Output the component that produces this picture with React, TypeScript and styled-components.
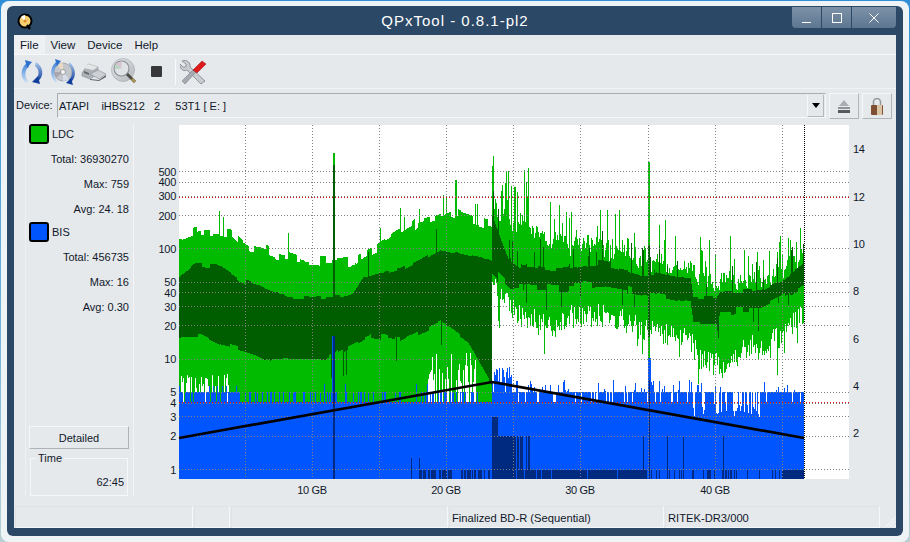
import React from 'react';
import styled, { createGlobalStyle } from 'styled-components';

const FONT = `"Liberation Sans", Arial, sans-serif`;

const GlobalStyle = createGlobalStyle`
    html, body, #root { margin: 0; padding: 0; width: 910px; height: 542px; overflow: hidden; }
    body { font-family: ${FONT}; font-size: 11px; color: #10182a; }
`;

// plot geometry, in window pixels
const LEFT = 179;
const RIGHT = 849;
const TOP = 125;
const BOTTOM = 479;
const DATA_END = 804;
const MID = 492;

const logY = (v: number) => 469 - Math.log10(v) * 110.3;

let seed = 73;
const rnd = () => {
    seed = (seed * 16807) % 2147483647;
    return seed / 2147483647;
};

const lerp = (pts: number[][], x: number) => {
    for (let i = 1; i < pts.length; i++) {
        if (x <= pts[i][0]) {
            const [x0, y0] = pts[i - 1];
            const [x1, y1] = pts[i];
            return y0 + ((y1 - y0) * (x - x0)) / (x1 - x0);
        }
    }
    return pts[pts.length - 1][1];
};

// noise that holds its value over a few columns, the trace is blocky
const blocky = (amp: number, min = 3, max = 9) => {
    let left = 0;
    let val = 0;
    return () => {
        if (left-- <= 0) {
            left = min + Math.floor(rnd() * (max - min));
            val = (rnd() - 0.5) * amp;
        }
        return val;
    };
};

const lightTop = [[179, 238], [200, 231], [230, 233], [246, 247], [265, 250], [280, 255], [330, 262], [350, 262], [380, 245], [420, 222], [450, 212], [491, 226], [492, 205], [520, 218], [550, 236], [600, 240], [640, 252], [690, 266], [720, 276], [760, 274], [780, 266], [804, 250]];
const darkTop = [[179, 277], [195, 265], [220, 267], [240, 280], [260, 287], [270, 293], [290, 297], [340, 297], [352, 294], [362, 278], [400, 270], [440, 249], [491, 260], [492, 215], [508, 258], [520, 266], [560, 270], [600, 263], [640, 273], [690, 280], [693, 299], [716, 299], [720, 293], [760, 292], [780, 282], [804, 265]];
const darkBot = [[179, 337], [200, 335], [220, 345], [240, 350], [255, 355], [270, 362], [325, 360], [350, 346], [370, 335], [400, 340], [440, 322], [470, 345], [491, 382], [492, 270], [510, 287], [560, 288], [600, 284], [640, 292], [690, 302], [693, 323], [716, 323], [720, 312], [760, 310], [780, 300], [804, 285]];
const lightBot = [[492, 275], [503, 288], [515, 302], [540, 310], [552, 318], [562, 306], [600, 302], [620, 307], [640, 316], [690, 328], [700, 348], [725, 356], [745, 336], [780, 326], [804, 300]];

const buildChart = () => {
    let light = '';
    let dark = '';
    let blue = '';
    let navy = '';
    const bar = (x: number, y1: number, y2: number) => `M${x + 0.5} ${y1.toFixed(0)}V${y2.toFixed(0)}`;
    const noiseTop = blocky(12, 2, 6);
    const noiseDarkTop = blocky(7, 4, 12);
    const noiseDarkBot = blocky(9, 4, 12);
    for (let x = LEFT; x < DATA_END; x++) {
        const left = x < MID;
        // LDC maximum envelope
        let t = lerp(lightTop, x) + noiseTop();
        if (left && rnd() < 0.03) t -= 30 * rnd();
        if (!left) {
            t += 14 * rnd();
            if (rnd() < 0.24) t -= (x < 560 ? 55 : 42) * rnd();
        }
        if (x >= 455 && x <= 456) t = 180;
        if (x >= 492 && x < 530 && rnd() < 0.34) t = 162 + 38 * rnd();
        let b: number;
        if (left) {
            b = 402;
            if (x < 232 && rnd() < 0.55) b = 374 + rnd() * 18;
            if (x > 425 && x < 476 && rnd() < 0.55) b = 352 + rnd() * 32;
        } else {
            b = lerp(lightBot, x) + rnd() * 24;
            if (rnd() < 0.12) b += 34 * rnd();
        }
        if (x === 333 || x === 334) { t = 153; b = 402; }
        if (x === 648 || x === 649) { t = 162; b = 372; }
        light += bar(x, t, b);
        // LDC average band
        let dt = lerp(darkTop, x) + noiseDarkTop() * (left ? 0.7 : 1);
        let db = lerp(darkBot, x) + noiseDarkBot() * (left ? 0.8 : 1);
        if (!left && rnd() < 0.09) dt -= 32 * rnd();
        if (!left && rnd() < 0.1) db += 26 * rnd();
        if (left && rnd() < 0.012) dt -= 24;
        if (left && rnd() < 0.012) db += 24;
        if (x === 333 || x === 334) { dt = 165; db = 398; }
        if (x === 648 || x === 649) { dt = 245; db = 337; }
        dark += bar(x, dt, db);
        // BIS
        let top = 402;
        const r = rnd();
        if (x < 240) top = r < 0.14 ? 402 : r > 0.86 ? 386 : 392;
        else if (x < 430) top = r < 0.2 ? 392 : r < 0.23 ? 384 : 402;
        else if (x < 478) top = r < 0.5 ? 392 : 402;
        else if (x < MID) top = 402;
        else if (x < 512) top = r < 0.8 ? 366 + rnd() * 20 : 392;
        else if (x < 690) top = r < 0.16 ? 402 : r > 0.78 ? 392 - rnd() * 12 : 392;
        else if (x < 762) top = r < 0.28 ? 403 + rnd() * 14 : r > 0.85 ? 388 - rnd() * 6 : 392;
        else top = r < 0.12 ? 402 : r > 0.82 ? 392 - rnd() * 10 : 392;
        if (x >= 332 && x <= 334) top = 336;
        if (x >= 648 && x <= 650) top = 358;
        blue += bar(x, top, BOTTOM);
        // dark BIS columns and the low band
        let band = false;
        if (x >= 492 && x < 648) band = !(x > 495 && x < 500) && !(x > 512 && x < 518) && rnd() > 0.04;
        else if (x >= 418 && x < 492) band = rnd() < 0.5;
        else if (x >= 650 && x < 783) band = rnd() < 0.18;
        else if (x >= 783) band = true;
        if (band) navy += bar(x, 470, BOTTOM);
        if (x >= 492 && x < 498) navy += bar(x, 417, BOTTOM);
        else if (x >= 498 && x < 512) navy += bar(x, 436, BOTTOM);
        else if (x >= 512 && x < 530 && rnd() < 0.55) navy += bar(x, 436, BOTTOM);
        else if (x > 530 && x < 780 && rnd() < 0.025) navy += bar(x, 436, BOTTOM);
        else if (x < 420 && rnd() < 0.012) navy += bar(x, 458, BOTTOM);
        if (x === 333 || x === 334) navy += bar(x, 336, BOTTOM);
        if (x === 649) navy += bar(x, 380, BOTTOM);
    }
    return { light, dark, blue, navy };
};

const chart = buildChart();

const leftTicks = [1, 2, 3, 4, 5, 10, 20, 30, 40, 50, 100, 200, 300, 400, 500];
const rightTicks = [
    [14, 148],
    [12, 196],
    [10, 243],
    [8, 290],
    [6, 338],
    [4, 385],
    [2, 432],
];
const gridX = [245, 312, 379, 446, 513, 580, 648, 715, 782];
const xLabels = [
    [312, '10 GB'],
    [446, '20 GB'],
    [580, '30 GB'],
    [715, '40 GB'],
] as const;

const Chart = () => (
    <svg width={762} height={373} viewBox="134 124 762 373" style={{ display: 'block', flex: 'none' }}>
        <rect x={LEFT} y={TOP} width={RIGHT - LEFT} height={BOTTOM - TOP} fill="#fff" />
        <path d={chart.light} stroke="#00bb00" strokeWidth={1} shapeRendering="crispEdges" />
        <path d={chart.dark} stroke="#005e00" strokeWidth={1} shapeRendering="crispEdges" />
        <path d={chart.blue} stroke="#0055ff" strokeWidth={1} shapeRendering="crispEdges" />
        <path d={chart.navy} stroke="#002a80" strokeWidth={1} shapeRendering="crispEdges" />
        {leftTicks.map((v) => (
            <line
                key={v}
                x1={LEFT}
                x2={RIGHT}
                y1={Math.round(logY(v)) + 0.5}
                y2={Math.round(logY(v)) + 0.5}
                stroke="#808080"
                strokeDasharray="1 2"
                shapeRendering="crispEdges"
            />
        ))}
        {gridX.map((x) => (
            <line key={x} x1={x + 0.5} x2={x + 0.5} y1={TOP} y2={BOTTOM} stroke="#808080" strokeDasharray="1 2" shapeRendering="crispEdges" />
        ))}
        <line x1={LEFT} x2={RIGHT} y1={197.5} y2={197.5} stroke="#e80000" strokeDasharray="1 2" shapeRendering="crispEdges" />
        <line x1={LEFT} x2={RIGHT} y1={402.5} y2={402.5} stroke="#f00000" strokeDasharray="1 2" shapeRendering="crispEdges" />
        <line x1={DATA_END + 0.5} x2={DATA_END + 0.5} y1={TOP} y2={BOTTOM} stroke="#000" strokeDasharray="1 1" shapeRendering="crispEdges" />
        <polyline points={`${LEFT},438 ${MID},382 ${DATA_END},438`} fill="none" stroke="#000" strokeWidth={2.7} />
        {leftTicks.map((v) => (
            <AxisText key={v} x={176} y={logY(v) + 4.5} textAnchor="end">
                {v}
            </AxisText>
        ))}
        {rightTicks.map(([v, y]) => (
            <AxisText key={v} x={853} y={y + 4.5}>
                {v}
            </AxisText>
        ))}
        {xLabels.map(([x, label]) => (
            <AxisText key={x} x={x} y={494} textAnchor="middle">
                {label}
            </AxisText>
        ))}
    </svg>
);

const ArcGradients = () => (
    <defs>
        <linearGradient id="arcLight" x1="0" y1="1" x2="0" y2="0">
            <stop offset="0" stopColor="#cfe2f6" />
            <stop offset="1" stopColor="#3f82d8" />
        </linearGradient>
        <linearGradient id="arcDark" x1="0" y1="0" x2="0" y2="1">
            <stop offset="0" stopColor="#a9c8ec" />
            <stop offset="1" stopColor="#123f9c" />
        </linearGradient>
    </defs>
);

const RefreshIcon = () => (
    <svg width={26} height={26} viewBox="0 0 26 26">
        <ArcGradients />
        <path d="M8 4C2 8 0 18 7 24l2-2C5 17 6 10 10 8z" fill="url(#arcLight)" />
        <path d="M6 1l7 2-5 6z" fill="#2f70cc" />
        <path d="M17 3C24 7 26 17 19 22l-2-2C21 16 20 10 16 7z" fill="url(#arcDark)" />
        <path d="M21 25l-8-2 6-6z" fill="#123f9c" />
    </svg>
);

const DiscRefreshIcon = () => (
    <svg width={26} height={26} viewBox="0 0 26 26">
        <ArcGradients />
        <circle cx={13} cy={13} r={9} fill="#c3c6cb" stroke="#8f949a" strokeWidth={0.7} />
        <path d="M13 13L7 6A9 9 0 0 1 13 4z" fill="#e7d9c4" />
        <path d="M13 13l6 7a9 9 0 0 1-6 2z" fill="#d7dde8" />
        <path d="M13 13L4 13A9 9 0 0 0 6 19z" fill="#a9a6ae" />
        <circle cx={13} cy={13} r={2.5} fill="#f6f6f6" stroke="#7f848a" strokeWidth={0.7} />
        <path d="M6 3C0 8-1 18 6 24l1-2C3 17 3 9 8 6z" fill="url(#arcLight)" />
        <path d="M5 0l6 2-4 5z" fill="#2f70cc" />
        <path d="M19 3c7 5 8 15 2 20l-2-2c4-4 4-11 0-15z" fill="url(#arcDark)" />
        <path d="M23 26l-7-2 5-5z" fill="#123f9c" />
    </svg>
);

const DriveIcon = () => (
    <svg width={26} height={26} viewBox="0 0 26 26">
        <path d="M1 14l6-9 10 3v7l-8 5-8-3z" fill="#aeb2b7" stroke="#7b8086" strokeWidth={0.5} />
        <path d="M7 5l10 3-5 3L2 9z" fill="#e4e6e8" />
        <path d="M9 15l8-4 8 4-7 5z" fill="#cdd0d4" stroke="#777c82" strokeWidth={0.5} />
        <path d="M9 20l9 1 7-5v2l-7 4-9-1z" fill="#5d6268" />
        <path d="M3 12l5 2v2l-5-2z" fill="#62676d" />
    </svg>
);

const ScanIcon = () => (
    <svg width={28} height={28} viewBox="0 0 28 28">
        <defs>
            <linearGradient id="scanFace" x1="0" y1="0" x2="1" y2="1">
                <stop offset="0" stopColor="#e4e6e8" />
                <stop offset="1" stopColor="#b4b7bb" />
            </linearGradient>
        </defs>
        <circle cx={12} cy={12} r={11.5} fill="url(#scanFace)" stroke="#a4a8ac" strokeWidth={0.6} />
        <circle cx={10.5} cy={10.5} r={7.5} fill="#dfe3e6" stroke="#8a8f94" strokeWidth={1.1} />
        <path d="M10.500 10.500L5 6A7 7 0 0 1 10.500 3.500z" fill="#d8c4d0" />
        <path d="M10.500 10.500L4 11A7 7 0 0 1 5 6z" fill="#b9d4c0" />
        <path d="M16 16l8 8" stroke="#4f4c46" strokeWidth={3} />
        <path d="M21 21l3 3" stroke="#b99a48" strokeWidth={2} />
    </svg>
);

const StopIcon = () => (
    <svg width={11} height={11} viewBox="0 0 11 11">
        <rect width={11} height={11} rx={1} fill="#38383a" />
    </svg>
);

const ToolsIcon = () => (
    <svg width={26} height={26} viewBox="0 0 26 26">
        <path d="M2 2l4 3v3L3 8 0 5c-1 4 3 8 7 6l14 14 4-3L10 8c1-4-3-8-8-6z" fill="#c9ccd0" stroke="#74797f" strokeWidth={0.7} />
        <path d="M2 22l11-11 3 2L5 25z" fill="#a7abb1" stroke="#6d7278" strokeWidth={0.5} />
        <path d="M13 11l9-9 4 3-9 9z" fill="#df1a1c" stroke="#9a1112" strokeWidth={0.5} />
    </svg>
);

const AppLogo = () => (
    <svg width={16} height={17} viewBox="0 0 16 17">
        <circle cx={8} cy={8} r={6.5} fill="#f6cf70" stroke="#000" strokeWidth={2} />
        <path d="M8 8L4 4A6 6 0 0 1 8 2z" fill="#fff" />
        <circle cx={8} cy={8} r={1.5} fill="#e08a30" />
        <path d="M10 12l3 4" stroke="#000" strokeWidth={2.5} />
    </svg>
);

const EjectIcon = () => (
    <svg width={12} height={14} viewBox="0 0 12 14">
        <path d="M6 1l5 6H1z" fill="#a9adb1" />
        <rect x={0} y={8} width={12} height={2} fill="#8f9397" />
        <rect x={0} y={11} width={12} height={3} fill="#55595d" />
    </svg>
);

const LockIcon = () => (
    <svg width={12} height={17} viewBox="0 0 12 17">
        <path d="M2.500 7V4a3.500 3.500 0 0 1 7 0v3" fill="none" stroke="#97989a" strokeWidth={1.6} />
        <rect x={0} y={7} width={12} height={10} rx={1} fill="#7e4f32" />
        <rect x={6} y={7} width={5} height={10} fill="#d9c4a6" />
    </svg>
);

const GripIcon = () => (
    <svg width={12} height={12} viewBox="0 0 12 12">
        <path d="M11.500 1L1 11.500M11.500 5L5 11.500M11.500 9L9 11.500" stroke="#f8f9fa" strokeWidth={1} />
    </svg>
);

const stats = [
    { name: 'LDC', color: '#00c000', total: '36930270', max: '759', avg: '24. 18' },
    { name: 'BIS', color: '#0055ff', total: '456735', max: '16', avg: '0.30' },
];

const statusCells = [
    { width: 178, text: '' },
    { width: 36, text: '' },
    { width: 217, text: '' },
    { width: 215, text: 'Finalized BD-R (Sequential)' },
    { width: 215, text: 'RITEK-DR3/000' },
];

const App = () => (
    <Desktop>
        <GlobalStyle />
        <Glass>
            <Frame>
                <TitleBar>
                    <LogoSlot>
                        <AppLogo />
                    </LogoSlot>
                    <Title>QPxTool - 0.8.1-pl2</Title>
                    <WindowButtons>
                        <WinButton $width={29}>
                            <MinGlyph />
                        </WinButton>
                        <WinButton $width={29}>
                            <MaxGlyph />
                        </WinButton>
                        <WinButton $width={44}>
                            <svg width={10} height={10} viewBox="0 0 10 10">
                                <path d="M0.500 0.500l9 9M9.500 0.500l-9 9" stroke="#fff" strokeWidth={1} />
                            </svg>
                        </WinButton>
                    </WindowButtons>
                </TitleBar>
                <Body>
                    <MenuBar>
                        <MenuItem $active>File</MenuItem>
                        <MenuItem>View</MenuItem>
                        <MenuItem>Device</MenuItem>
                        <MenuItem>Help</MenuItem>
                    </MenuBar>
                    <ToolBar>
                        <ToolSlot><RefreshIcon /></ToolSlot>
                        <ToolSlot><DiscRefreshIcon /></ToolSlot>
                        <ToolSlot><DriveIcon /></ToolSlot>
                        <ToolSlot><ScanIcon /></ToolSlot>
                        <ToolSlot><StopIcon /></ToolSlot>
                        <ToolDivider />
                        <ToolSlot><ToolsIcon /></ToolSlot>
                    </ToolBar>
                    <DeviceRow>
                        <DeviceLabel>Device:</DeviceLabel>
                        <DeviceCombo>
                            <DeviceName>{'ATAPI    iHBS212   2     53T1 [ E: ]'}</DeviceName>
                            <ComboArrow>
                                <svg width={8} height={5} viewBox="0 0 8 5">
                                    <path d="M0 0h8L4 5z" fill="#000" />
                                </svg>
                            </ComboArrow>
                        </DeviceCombo>
                        <IconButton><EjectIcon /></IconButton>
                        <IconButton><LockIcon /></IconButton>
                    </DeviceRow>
                    <Main>
                        <SidePanel>
                            {stats.map((s) => (
                                <React.Fragment key={s.name}>
                                    <LegendRow>
                                        <Swatch $color={s.color} />
                                        <span>{s.name}</span>
                                    </LegendRow>
                                    <StatRow>Total: {s.total}</StatRow>
                                    <StatRow>Max: {s.max}</StatRow>
                                    <StatRow>Avg: {s.avg}</StatRow>
                                </React.Fragment>
                            ))}
                            <Spacer />
                            <DetailButton>Detailed</DetailButton>
                            <TimeGroup>
                                <TimeLegend>Time</TimeLegend>
                                <span>62:45</span>
                            </TimeGroup>
                        </SidePanel>
                        <Chart />
                    </Main>
                    <StatusBar>
                        {statusCells.map((c, i) => (
                            <StatusCell key={i} $width={c.width}>
                                {c.text}
                            </StatusCell>
                        ))}
                        <Grip>
                            <GripIcon />
                        </Grip>
                    </StatusBar>
                </Body>
            </Frame>
        </Glass>
    </Desktop>
);

export default App;

const Desktop = styled.div`
    width: 910px;
    height: 542px;
    padding: 1px 1px 0 1px;
    box-sizing: border-box;
    background: linear-gradient(#2f8fd6 0, #6fb2dc 60%, #b9cfd4 100%);
`;
const Glass = styled.div`
    height: 541px;
    box-sizing: border-box;
    padding: 5px 6px 6px 6px;
    border-radius: 8px;
    background: #eef3f6;
`;
const Frame = styled.div`
    height: 100%;
    box-sizing: border-box;
    padding: 0 7px 8px 7px;
    border-radius: 6px;
    background: #2b4967;
    display: flex;
    flex-direction: column;
`;
const TitleBar = styled.div`
    height: 29px;
    flex: none;
    position: relative;
    display: flex;
    align-items: flex-start;
    justify-content: space-between;
`;
const LogoSlot = styled.div`
    margin: 7px 0 0 3px;
    display: flex;
`;
const Title = styled.div`
    position: absolute;
    left: 0;
    right: 0;
    top: 6px;
    text-align: center;
    color: #fff;
    font-size: 15px;
    letter-spacing: 1px;
`;
const WindowButtons = styled.div`
    display: flex;
    gap: 1px;
    margin-top: 1px;
    position: relative;
`;
const WinButton = styled.div<{ $width: number }>`
    width: ${(p) => p.$width}px;
    height: 21px;
    background: linear-gradient(#7d92a8, #5d7690);
    display: flex;
    align-items: center;
    justify-content: center;
    &:first-child { border-bottom-left-radius: 4px; }
    &:last-child { border-bottom-right-radius: 4px; }
`;
const MinGlyph = styled.div`
    width: 9px;
    height: 1px;
    margin-top: 9px;
    background: #fff;
`;
const MaxGlyph = styled.div`
    width: 8px;
    height: 8px;
    border: 1px solid #fff;
`;
const Body = styled.div`
    flex: 1;
    min-height: 0;
    background: #e6e9ec;
    display: flex;
    flex-direction: column;
`;
const MenuBar = styled.div`
    height: 20px;
    box-sizing: border-box;
    flex: none;
    display: flex;
    align-items: stretch;
    border-bottom: 1px solid #f7f8f9;
`;
const MenuItem = styled.div<{ $active?: boolean }>`
    padding: 0 6px;
    display: flex;
    align-items: center;
    font-size: 11.5px;
    background: ${(p) => (p.$active ? '#eef0f2' : 'transparent')};
`;
const ToolBar = styled.div`
    height: 34px;
    box-sizing: border-box;
    flex: none;
    padding-left: 4px;
    display: flex;
    align-items: center;
    gap: 3px;
    border-bottom: 1px solid #f0f2f4;
`;
const ToolSlot = styled.div`
    width: 28px;
    display: flex;
    align-items: center;
    justify-content: center;
`;
const ToolDivider = styled.div`
    width: 1px;
    height: 26px;
    margin-left: 2px;
    background: #f8f9fa;
`;
const DeviceRow = styled.div`
    height: 35px;
    flex: none;
    padding: 4px 3px 0 2px;
    box-sizing: border-box;
    display: flex;
    align-items: flex-start;
`;
const DeviceLabel = styled.div`
    width: 41px;
    flex: none;
    line-height: 25px;
`;
const DeviceCombo = styled.div`
    width: 769px;
    height: 25px;
    flex: none;
    box-sizing: border-box;
    padding: 0 1px 0 1px;
    display: flex;
    align-items: center;
    justify-content: space-between;
    border: 1px solid #a8adb1;
    border-right-color: #f6f7f8;
    border-bottom-color: #f6f7f8;
`;
const DeviceName = styled.div`
    white-space: pre;
`;
const ComboArrow = styled.div`
    width: 15px;
    height: 21px;
    display: flex;
    align-items: center;
    justify-content: center;
    border: 1px solid #b4b8bc;
    border-left-color: #f6f7f8;
    border-top: 0;
`;
const IconButton = styled.div`
    width: 30px;
    height: 26px;
    margin-left: 3px;
    flex: none;
    box-sizing: border-box;
    display: flex;
    align-items: center;
    justify-content: center;
    border: 1px solid #b0b5b9;
    border-left-color: #f6f7f8;
    border-top-color: #f6f7f8;
`;
const Main = styled.div`
    height: 373px;
    flex: none;
    display: flex;
`;
const SidePanel = styled.div`
    width: 109px;
    flex: none;
    box-sizing: border-box;
    margin-left: 11px;
    padding: 0 4px 1px 3px;
    display: flex;
    flex-direction: column;
    align-items: stretch;
    border-left: 1px solid #eef0f2;
    border-right: 1px solid #f2f4f5;
`;
const LegendRow = styled.div`
    height: 20px;
    margin-bottom: 3px;
    display: flex;
    align-items: center;
    gap: 3px;
`;
const Swatch = styled.div<{ $color: string }>`
    width: 20px;
    height: 20px;
    box-sizing: border-box;
    border: 2px solid #000;
    border-radius: 3px;
    background: ${(p) => p.$color};
`;
const StatRow = styled.div`
    height: 25px;
    line-height: 25px;
    text-align: right;
`;
const Spacer = styled.div`
    flex: 1;
`;
const DetailButton = styled.div`
    height: 23px;
    flex: none;
    line-height: 22px;
    text-align: center;
    box-sizing: border-box;
    border: 1px solid #aeb3b7;
    border-left-color: #f6f7f8;
    border-top-color: #f6f7f8;
`;
const TimeGroup = styled.div`
    position: relative;
    height: 38px;
    flex: none;
    margin: 9px 1px 0 1px;
    box-sizing: border-box;
    border: 1px solid #f6f7f8;
    display: flex;
    align-items: flex-end;
    justify-content: flex-end;
    padding: 0 3px 7px 0;
`;
const TimeLegend = styled.div`
    position: absolute;
    left: 5px;
    top: -7px;
    padding: 0 2px;
    background: #e6e9ec;
`;
const StatusBar = styled.div`
    height: 24px;
    flex: none;
    box-sizing: border-box;
    padding: 2px 0 0 1px;
    margin-top: auto;
    display: flex;
    gap: 1px;
`;
const StatusCell = styled.div<{ $width: number }>`
    width: ${(p) => p.$width}px;
    flex: none;
    box-sizing: border-box;
    padding: 1px 2px 0 2px;
    line-height: 20px;
    font-size: 11.2px;
    border: 1px solid #dfe2e5;
    border-right-color: #f6f7f8;
    border-bottom-color: #f6f7f8;
`;
const Grip = styled.div`
    flex: 1;
    display: flex;
    align-items: flex-end;
    justify-content: flex-end;
`;
const AxisText = styled.text`
    font-family: ${FONT};
    font-size: 11px;
    letter-spacing: -0.3px;
    fill: #10182a;
`;
